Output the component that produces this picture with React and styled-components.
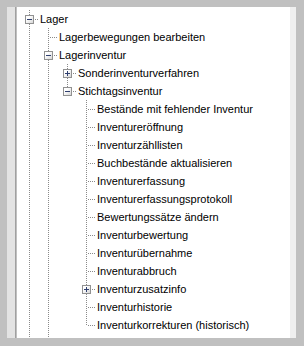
import React from 'react';
import styled, { createGlobalStyle } from 'styled-components';

const GlobalStyle = createGlobalStyle`
  html, body {
    margin: 0;
    padding: 0;
    background: #c0c0c0;
  }
  body {
    font-family: "Liberation Sans", Arial, sans-serif;
  }
`;

// the visible part of the tree, flattened; guides says for each ancestor
// level whether its vertical line keeps running through this row
const rows = [
  { text: 'Lager', guides: [], last: false, box: 'minus' },
  { text: 'Lagerbewegungen bearbeiten', guides: [true], last: false },
  { text: 'Lagerinventur', guides: [true], last: false, box: 'minus' },
  { text: 'Sonderinventurverfahren', guides: [true, true], last: false, box: 'plus' },
  { text: 'Stichtagsinventur', guides: [true, true], last: true, box: 'minus' },
  { text: 'Bestände mit fehlender Inventur', guides: [true, true, false], last: false },
  { text: 'Inventureröffnung', guides: [true, true, false], last: false },
  { text: 'Inventurzähllisten', guides: [true, true, false], last: false },
  { text: 'Buchbestände aktualisieren', guides: [true, true, false], last: false },
  { text: 'Inventurerfassung', guides: [true, true, false], last: false },
  { text: 'Inventurerfassungsprotokoll', guides: [true, true, false], last: false },
  { text: 'Bewertungssätze ändern', guides: [true, true, false], last: false },
  { text: 'Inventurbewertung', guides: [true, true, false], last: false },
  { text: 'Inventurübernahme', guides: [true, true, false], last: false },
  { text: 'Inventurabbruch', guides: [true, true, false], last: false },
  { text: 'Inventurzusatzinfo', guides: [true, true, false], last: false, box: 'plus' },
  { text: 'Inventurhistorie', guides: [true, true, false], last: false },
  { text: 'Inventurkorrekturen (historisch)', guides: [true, true, false], last: true },
  { text: 'Lagerinformationen', guides: [true], last: false, box: 'plus' },
];

const dotsDown = 'repeating-linear-gradient(to bottom, #8a8a8a 0 1px, transparent 1px 2px)';
const dotsRight = 'repeating-linear-gradient(to right, #8a8a8a 0 1px, transparent 1px 2px)';

const App = () => (
  <>
    <GlobalStyle />
    <Screen>
      <Panel>
        <Gutter />
        <Tree>
          {rows.map((r, i) => (
            <Row key={i}>
              {r.guides.map((g, j) => <Guide key={j} $line={g} />)}
              <Connector $last={r.last}>
                {r.box ? (
                  <Box>
                    <BoxBar />
                    {r.box === 'plus' ? <BoxStem /> : null}
                  </Box>
                ) : null}
              </Connector>
              <Label>{r.text}</Label>
            </Row>
          ))}
        </Tree>
        <ScrollEdge />
      </Panel>
    </Screen>
  </>
);

const Screen = styled.div`
  width: 304px;
  height: 346px;
  box-sizing: border-box;
  padding: 7px 8px 8px 7px;
  background: #c0c0c0;
`;

const Panel = styled.div`
  display: flex;
  height: 100%;
`;

const Gutter = styled.div`
  width: 8px;
  background: #e3e3e3;
  border-right: 1px solid #a0a0a0;
`;

const Tree = styled.div`
  flex: 1;
  background: #ffffff;
  overflow: hidden;
  padding: 3px 0 0 3px;
  margin-left: 1px;
`;

const ScrollEdge = styled.div`
  width: 6px;
  background: #efefef;
`;

const Row = styled.div`
  display: flex;
  height: 18px;
  white-space: nowrap;
`;

const Guide = styled.div`
  flex: none;
  width: 19px;
  height: 18px;
  position: relative;

  &::before {
    content: '';
    display: ${({ $line }) => ($line ? 'block' : 'none')};
    position: absolute;
    left: 9px;
    top: 0;
    width: 1px;
    height: 18px;
    background: ${dotsDown};
  }
`;

const Connector = styled.div`
  flex: none;
  width: 19px;
  height: 18px;
  position: relative;

  &::before {
    content: '';
    position: absolute;
    left: 9px;
    top: 0;
    width: 1px;
    height: ${({ $last }) => ($last ? '10px' : '18px')};
    background: ${dotsDown};
  }

  &::after {
    content: '';
    position: absolute;
    left: 11px;
    top: 9px;
    width: 7px;
    height: 1px;
    background: ${dotsRight};
  }
`;

const Box = styled.div`
  position: absolute;
  left: 5px;
  top: 5px;
  width: 7px;
  height: 7px;
  border: 1px solid #919191;
  background: linear-gradient(to bottom right, #ffffff 30%, #d6d6d6);
  z-index: 1;
`;

const BoxBar = styled.div`
  position: absolute;
  left: 1px;
  top: 3px;
  width: 5px;
  height: 1px;
  background: #2f3f6f;
`;

const BoxStem = styled.div`
  position: absolute;
  left: 3px;
  top: 1px;
  width: 1px;
  height: 5px;
  background: #2f3f6f;
`;

const Label = styled.span`
  padding-left: 1px;
  font-size: 11px;
  line-height: 18px;
  color: #000000;
`;

export default App;
